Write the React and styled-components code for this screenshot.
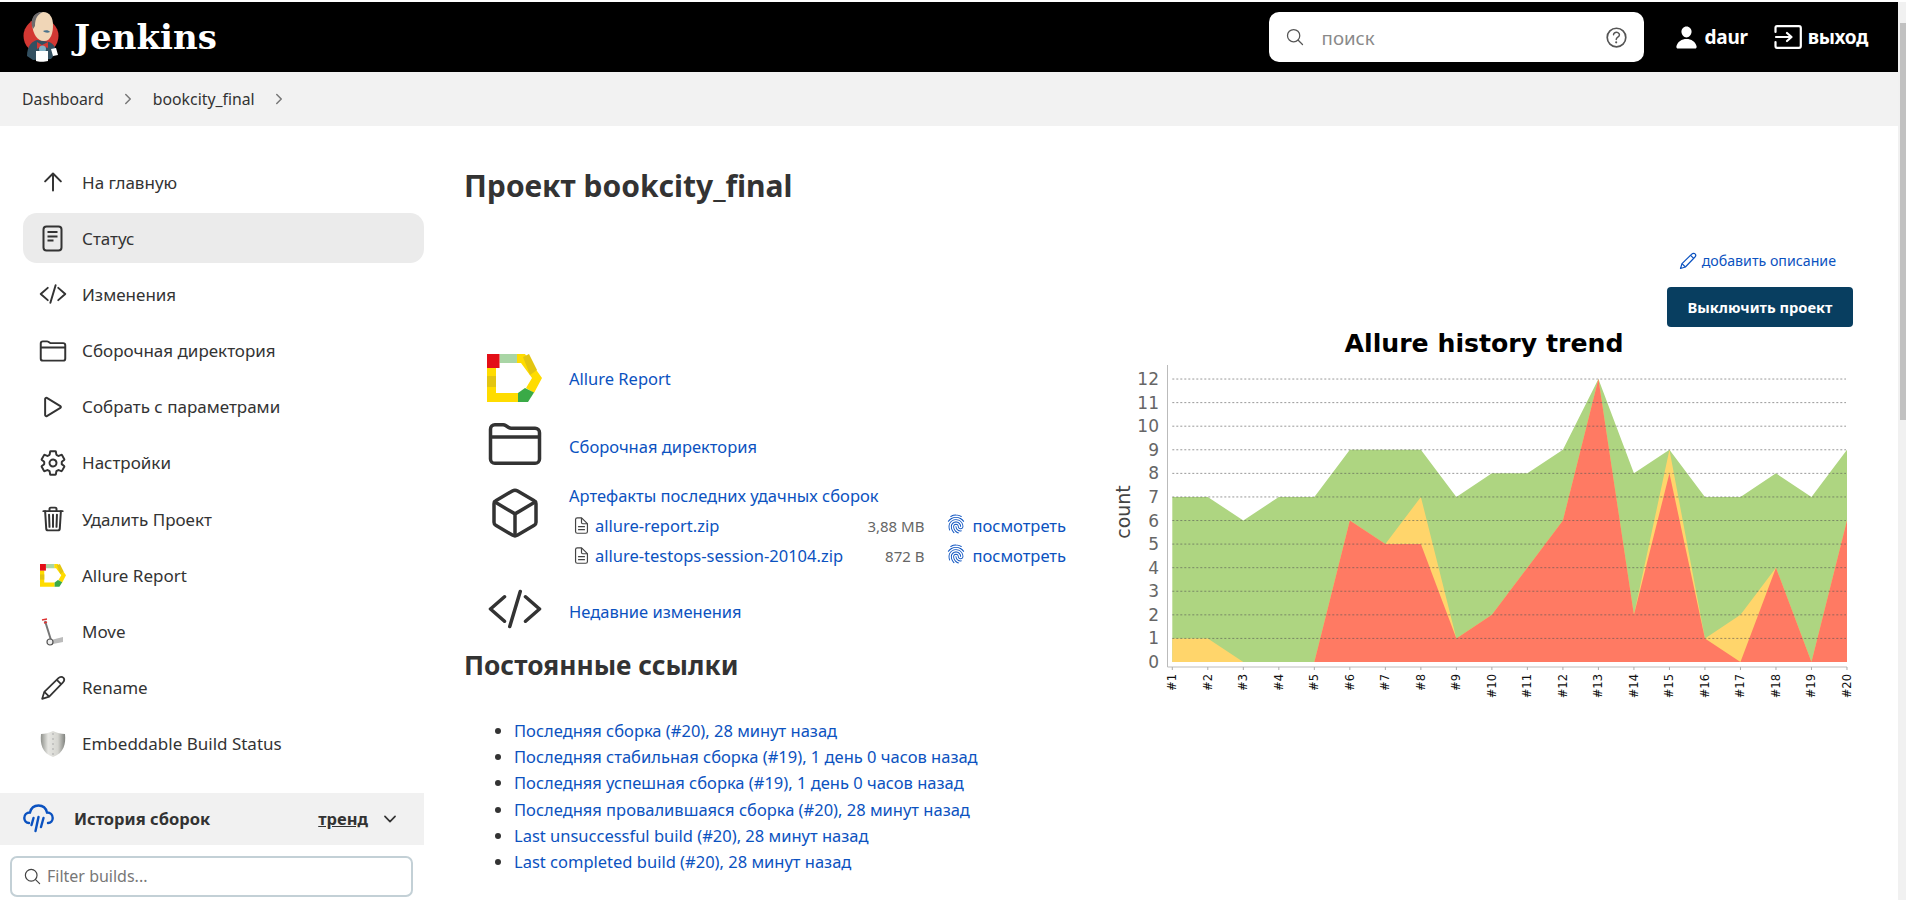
import React from 'react';
import styled, {createGlobalStyle} from 'styled-components';
import {
    IoArrowUpOutline, IoCodeSlashOutline, IoFolderOutline, IoPlayOutline, IoDocumentTextOutline,
    IoSettingsOutline, IoTrashOutline, IoChevronDownOutline,
    IoChevronForwardOutline, IoSearchOutline, IoHelpCircleOutline, IoPerson, IoCubeOutline,
    IoFingerPrintOutline,
} from 'react-icons/io5';

const GlobalStyle = createGlobalStyle`
  html, body {
    margin: 0;
    height: 900px;
    overflow: hidden;
    background: #fff;
  }
  body {
    font-family: "Noto Sans", "Liberation Sans", sans-serif;
    color: #333;
  }
  * { box-sizing: border-box; }
`

const WindowSC = styled('div')`
  display: flex;
  width: 1906px;
  height: 900px;
  padding-top: 2px;
  background: #fff;
`

const PageSC = styled('div')`
  width: 1898px;
  height: 898px;
  display: flex;
  flex-direction: column;
  overflow: hidden;
`

const ScrollbarSC = styled('div')`
  width: 8px;
  background: #f1f1f1;
  padding: 21px 0 0 2px;
  height: 898px;
`

const ThumbSC = styled('div')`
  width: 6px;
  height: 397px;
  background: #c1c1c1;
`

const HeaderSC = styled('header')`
  height: 70px;
  background: #000;
  color: #fff;
  display: flex;
  align-items: center;
  padding: 0 30px 0 23px;
  flex-shrink: 0;
`

const BrandSC = styled('div')`
  display: flex;
  align-items: center;
  gap: 15px;
  flex: 1;
  font-family: "DejaVu Serif", serif;
  font-weight: 700;
  font-size: 34px;
`

const SearchSC = styled('div')`
  width: 375px;
  height: 50px;
  background: #fff;
  border-radius: 10px;
  display: flex;
  align-items: center;
  padding: 0 14px 0 16px;
  color: #555;
  margin-right: 30px;
`

const SearchInputSC = styled('input')`
  flex: 1;
  border: 0;
  outline: none;
  min-width: 0;
  margin-left: 15px;
  font: 400 18.7px "Noto Sans", sans-serif;
  &::placeholder { color: #8a8a8a; opacity: 1; }
`

const HeaderLinkSC = styled('div')`
  display: flex;
  align-items: center;
  gap: 6px;
  font-weight: 700;
  font-size: 19px;
  letter-spacing: -0.3px;
  margin-left: ${props => props.$left || 0}px;
`

const CrumbsSC = styled('nav')`
  height: 54px;
  background: #f2f2f2;
  display: flex;
  align-items: center;
  padding-left: 22px;
  font-size: 15.8px;
  color: #333;
  flex-shrink: 0;
`

const CrumbSepSC = styled('span')`
  display: inline-flex;
  margin: 0 16.5px;
  color: #777;
`

const BodySC = styled('div')`
  flex: 1;
  display: flex;
  min-height: 0;
`

const SidebarSC = styled('aside')`
  width: 424px;
  flex-shrink: 0;
  padding-top: 31px;
`

const NavSC = styled('div')`
  display: flex;
  flex-direction: column;
  gap: 6.2px;
  padding-left: 23px;
`

const NavItemSC = styled('div')`
  height: 50px;
  display: flex;
  align-items: center;
  border-radius: 14px;
  background: ${props => props.$active ? '#ebebeb' : 'transparent'};
  font-size: 17px;
  color: #333;
`

const NavIconSC = styled('span')`
  width: 59px;
  display: flex;
  justify-content: center;
  flex-shrink: 0;
  font-size: 28px;

  ${props => props.$thin && 'svg * { stroke-width: 36px; }'}
`

const HistoryBarSC = styled('div')`
  margin-top: 24px;
  height: 52px;
  background: #f1f1f1;
  display: flex;
  align-items: center;
  padding: 0 25px 0 23px;
  font-weight: 700;
  font-size: 16.5px;
`

const HistoryTitleSC = styled('span')`
  flex: 1;
  margin-left: 20px;
`

const TrendSC = styled('span')`
  text-decoration: underline;
  margin-right: 13px;
`

const FilterSC = styled('div')`
  margin: 11px 0 0 10px;
  width: 403px;
  height: 41px;
  border: 2px solid #c3d0d6;
  border-radius: 7px;
  display: flex;
  align-items: center;
  padding-left: 11px;
  color: #444;
`

const FilterInputSC = styled('input')`
  flex: 1;
  border: 0;
  outline: none;
  min-width: 0;
  margin-left: 3px;
  font: 400 16px "Noto Sans", sans-serif;
  &::placeholder { color: #777; opacity: 1; }
`

const MainSC = styled('main')`
  flex: 1;
  padding: 0 45px 0 40px;
  min-width: 0;
`

const TitleSC = styled('h1')`
  margin: 39px 0 0;
  font-size: 30px;
  line-height: 42px;
  font-weight: 700;
`

const ActionsSC = styled('div')`
  margin-top: 43px;
  display: flex;
  flex-direction: column;
  align-items: flex-end;
`

const AddDescSC = styled('a')`
  display: flex;
  align-items: center;
  gap: 5px;
  color: #0b52c0;
  font-size: 14.2px;
  line-height: 22px;
  margin-right: 17px;
`

const DisableBtnSC = styled('button')`
  margin-top: 15px;
  width: 186px;
  height: 40px;
  border: 0;
  border-radius: 4px;
  background: #083e60;
  color: #fff;
  font: 700 14.7px "Noto Sans", sans-serif;
`

const ColumnsSC = styled('div')`
  display: flex;
  justify-content: space-between;
  margin-right: -7px;
`

const LeftSC = styled('div')`
  width: 640px;
  padding-top: 27px;
`

const LinkRowSC = styled('div')`
  display: flex;
  align-items: ${props => props.$top ? 'flex-start' : 'center'};
  height: ${props => props.$h}px;
  margin-bottom: 19px;
  padding-left: 23px;
`

const BigIconSC = styled('span')`
  width: 82px;
  flex-shrink: 0;
  display: flex;
  font-size: 56px;
  color: #333;
  line-height: 0;
`

const LinkSC = styled('a')`
  color: #0b52c0;
  font-size: 16.5px;
  line-height: 22px;
  padding-top: ${props => props.$shift || 0}px;
`

const ArtifactsSC = styled('div')`
  flex: 1;
`

const ArtifactTitleSC = styled(LinkSC)`
  display: block;
  height: 26px;
`

const ArtifactRowSC = styled('div')`
  display: grid;
  grid-template-columns: 20px 1fr auto 48px auto;
  align-items: center;
  height: 30px;
  margin-left: 6px;
  width: 491px;
`

const ArtifactSizeSC = styled('span')`
  text-align: right;
  color: #666;
  font-size: 15px;
`

const FingerprintSC = styled('span')`
  display: flex;
  justify-content: flex-end;
  padding-right: 6px;
  margin-top: -5px;
  color: #0b52c0;
  font-size: 20px;
`

const FileIconSC = styled('span')`
  display: flex;
  color: #444;
  font-size: 19px;
  margin-left: -3px;
  margin-top: -2px;
`

const SubTitleSC = styled('h2')`
  margin: 1px 0 0;
  font-size: 26.3px;
  line-height: 34px;
  font-weight: 700;
`

const PermalinksSC = styled('ul')`
  margin: 36px 0 0;
  padding: 0 0 0 50px;
  list-style: disc;
`

const PermalinkSC = styled('li')`
  height: 26.2px;
  line-height: 26px;
  font-size: 16.5px;
  color: #333;
`

const ChartSC = styled('svg')`
  display: block;
  width: 750px;
  height: 380px;
  flex-shrink: 0;
  margin-top: 2px;
`

const JenkinsLogo = () => (
    <svg width="36" height="50" viewBox="0 0 36 50">
        <circle cx="18" cy="24" r="17.5" fill="#d33833"/>
        <path d="M4 44 C4 33 10 29 14 28 L26 30 C31 32 33 36 33 41 L28 47 L10 48Z" fill="#335061"/>
        <path d="M9 12 C9 3 15 0 20 0 C27 0 30 6 30 13 C30 21 28 29 21 29 C14 29 10 22 9 12Z" fill="#f0d6b7"/>
        <path d="M9 14 C7 6 13 -1 20 0 C15 2 12 6 12 14 L10 17Z" fill="#6d6b6d"/>
        <path d="M14 30 L19 33 L25 30 L25 36 L19 34 L14 37Z" fill="#d33833"/>
        <circle cx="19.500" cy="37" r="3.500" fill="#81b0c4"/>
        <path d="M13 39 H25 V49 C22 50 15 50 13 49Z" fill="#fff"/>
        <path d="M28 37 L33 36 L35 43 L30 44Z" fill="#fff"/>
        <path d="M20 19 C22 18 26 18 27 20 C25 21 22 21 20 19Z" fill="#49728b"/>
    </svg>
)

const AllureLogo = ({size}) => (
    <svg width={size} height={size * 48 / 55} viewBox="0 0 55 48">
        <path d="M0 14 H9 V39 H31 V48 H0Z" fill="#ffdc00"/>
        <rect x="0" y="22" width="9" height="11" fill="#e3c511"/>
        <path d="M30 0 H38 L55 24 L47 39 L39 34 L45 24 L34 9 H30Z" fill="#ffdc00"/>
        <path d="M36 3 L42 0 L50 16 L43 21Z" fill="#e3c511"/>
        <rect x="12.500" y="0" width="17.500" height="9" fill="#a9d5a5"/>
        <rect x="0" y="0" width="12.500" height="14" fill="#e30f17"/>
        <path d="M31 39 L38 34 L47 38.500 L41 48 H31Z" fill="#3aaa47"/>
    </svg>
)

const StatusIcon = () => (
    <svg width="21" height="27" viewBox="0 0 21 27" fill="none" stroke="#333" strokeWidth="2">
        <rect x="1.500" y="1.500" width="18" height="24" rx="3"/>
        <path d="M5.500 7 H15.500 M5.500 11.500 H15.500 M5.500 15.500 H11.500"/>
    </svg>
)

const PencilIcon = ({size, color}) => (
    <svg width={size} height={size} viewBox="0 0 24 24" fill="none" stroke={color} strokeWidth="1.600" strokeLinejoin="round">
        <path d="M2 22 L4 15.500 L17 2.800 C18.500 1.400 20.500 1.400 21.500 2.500 C22.700 3.700 22.500 5.500 21 7 L8.500 20Z"/>
        <path d="M15.500 4.500 L19.500 8.500 M4 15.500 L8.500 20"/>
    </svg>
)

const RainIcon = () => (
    <svg width="31" height="29" viewBox="0 0 31 29" fill="none" stroke="#0b52c0" strokeWidth="2.400" strokeLinecap="round">
        <path d="M6 19 C3 19 1.300 16.500 1.300 14 C1.300 11 3.500 8.500 7 8.500 C8 4 11.500 1.500 15.500 1.500 C19.500 1.500 23 4 24 8.500 C27.500 8.500 29.700 11 29.700 14 C29.700 16.500 28 19 25 19"/>
        <path d="M10.500 14 L8.500 21 M15.500 13 L12.500 27 M20.500 14 L18 23"/>
    </svg>
)

const MoveIcon = () => (
    <svg width="28" height="28" viewBox="0 0 28 28">
        <path d="M6 3 L12 22" stroke="#777" strokeWidth="2"/>
        <path d="M3 2 L8 1 M5 5 L8 4" stroke="#d33" strokeWidth="1.500"/>
        <path d="M12 22 L24 19 V24 L14 26Z" fill="#bbb"/>
        <circle cx="11" cy="24" r="3" fill="#eee" stroke="#555" strokeWidth="1.200"/>
    </svg>
)

const ShieldIcon = () => (
    <svg width="26" height="28" viewBox="0 0 26 28">
        <defs>
            <linearGradient id="shieldFill" x1="0" x2="1" y1="0" y2="0">
                <stop offset="0" stopColor="#8f918c"/>
                <stop offset="0.3" stopColor="#e6e6e2"/>
                <stop offset="0.7" stopColor="#d5d5d0"/>
                <stop offset="1" stopColor="#80827e"/>
            </linearGradient>
        </defs>
        <path d="M13 1 C17 3 21 4 25 4 C26 14 24 23 13 27 C2 23 0 14 1 4 C5 4 9 3 13 1Z" fill="url(#shieldFill)"/>
        <path d="M13 3 V25" stroke="#aaa" strokeWidth="1" strokeDasharray="2 3"/>
    </svg>
)

const LogoutIcon = () => (
    <svg width="28" height="24" viewBox="0 0 28 24" fill="none" stroke="#fff" strokeWidth="2.200" strokeLinecap="round" strokeLinejoin="round">
        <path d="M1.500 7 V3 C1.500 2 2 1.200 3 1.200 H25 C26 1.200 26.800 2 26.800 3 V21 C26.800 22 26 22.800 25 22.800 H3 C2 22.800 1.500 22 1.500 21 V17"/>
        <path d="M2 12 H17 M13 8 L17.500 12 L13 16"/>
    </svg>
)

const navItems = [
    {label: 'На главную', icon: <IoArrowUpOutline/>, thin: true},
    {label: 'Статус', icon: <StatusIcon/>, active: true},
    {label: 'Изменения', icon: <IoCodeSlashOutline/>, thin: true},
    {label: 'Сборочная директория', icon: <IoFolderOutline/>, thin: true},
    {label: 'Собрать с параметрами', icon: <IoPlayOutline/>, thin: true},
    {label: 'Настройки', icon: <IoSettingsOutline/>, thin: true},
    {label: 'Удалить Проект', icon: <IoTrashOutline/>, thin: true},
    {label: 'Allure Report', icon: <AllureLogo size={26}/>},
    {label: 'Move', icon: <MoveIcon/>},
    {label: 'Rename', icon: <PencilIcon size={26} color="#333"/>},
    {label: 'Embeddable Build Status', icon: <ShieldIcon/>},
]

const artifacts = [
    {name: 'allure-report.zip', size: '3,88 MB'},
    {name: 'allure-testops-session-20104.zip', size: '872 B'},
]

const permalinks = [
    'Последняя сборка (#20), 28 минут назад',
    'Последняя стабильная сборка (#19), 1 день 0 часов назад',
    'Последняя успешная сборка (#19), 1 день 0 часов назад',
    'Последняя провалившаяся сборка (#20), 28 минут назад',
    'Last unsuccessful build (#20), 28 минут назад',
    'Last completed build (#20), 28 минут назад',
]

// chart data, one value per build
const total = [7, 7, 6, 7, 7, 9, 9, 9, 7, 8, 8, 9, 12, 8, 9, 7, 7, 8, 7, 9]
const broken = [1, 1, 0, 0, 0, 6, 5, 7, 1, 2, 4, 6, 12, 2, 9, 1, 2, 4, 0, 6]
const failed = [0, 0, 0, 0, 0, 6, 5, 5, 1, 2, 4, 6, 12, 2, 8, 1, 0, 4, 0, 6]

const X0 = 62.3
const XSTEP = 35.51
const Y0 = 333
const YSTEP = 23.58
const xAt = i => X0 + i * XSTEP
const yAt = v => Y0 - v * YSTEP

const areaPath = values =>
    `M${xAt(0)} ${Y0} ` + values.map((v, i) => `L${xAt(i)} ${yAt(v)}`).join(' ') + ` L${xAt(19)} ${Y0}Z`

const TrendChart = () => (
    <ChartSC viewBox="0 0 750 380">
        <text x="374" y="23" textAnchor="middle" fontFamily="DejaVu Sans" fontWeight="700" fontSize="25.200" fill="#000">Allure history trend</text>
        <path d={areaPath(total)} fill="#aed581"/>
        <path d={areaPath(broken)} fill="#ffd56b"/>
        <path d={areaPath(failed)} fill="#ff7a63"/>
        {Array.from({length: 13}, (_, v) => (
            <g key={v}>
                {v > 0 && <line x1={X0} x2="736" y1={yAt(v)} y2={yAt(v)} stroke="#555" strokeOpacity="0.6" strokeDasharray="2 2"/>}
                <text x="49" y={yAt(v) + 6} textAnchor="end" fontFamily="DejaVu Sans" fontSize="17" fill="#666">{v}</text>
            </g>
        ))}
        <path d="M57.500 36 V338 H737" fill="none" stroke="#bbb" strokeWidth="1"/>
        {total.map((_, i) => (
            <g key={i}>
                <line x1={xAt(i)} x2={xAt(i)} y1="338" y2="341" stroke="#aaa"/>
                <text transform={`translate(${xAt(i) + 4} 345) rotate(-90)`} textAnchor="end" fontFamily="DejaVu Sans" fontSize="11.500" fill="#111">#{i + 1}</text>
            </g>
        ))}
        <text transform="translate(20 183) rotate(-90)" textAnchor="middle" fontFamily="DejaVu Sans" fontSize="19" fill="#444">count</text>
    </ChartSC>
)

const App = () => {
    return (
        <WindowSC>
            <GlobalStyle/>
            <PageSC>
                <HeaderSC>
                    <BrandSC><JenkinsLogo/>Jenkins</BrandSC>
                    <SearchSC>
                        <IoSearchOutline size={20}/>
                        <SearchInputSC placeholder="поиск" readOnly/>
                        <IoHelpCircleOutline size={27}/>
                    </SearchSC>
                    <HeaderLinkSC><IoPerson size={25}/>daur</HeaderLinkSC>
                    <HeaderLinkSC $left={26}><LogoutIcon/>выход</HeaderLinkSC>
                </HeaderSC>
                <CrumbsSC>
                    Dashboard
                    <CrumbSepSC><IoChevronForwardOutline size={16}/></CrumbSepSC>
                    bookcity_final
                    <CrumbSepSC><IoChevronForwardOutline size={16}/></CrumbSepSC>
                </CrumbsSC>
                <BodySC>
                    <SidebarSC>
                        <NavSC>
                            {navItems.map(item => (
                                <NavItemSC key={item.label} $active={item.active}>
                                    <NavIconSC $thin={item.thin}>{item.icon}</NavIconSC>
                                    {item.label}
                                </NavItemSC>
                            ))}
                        </NavSC>
                        <HistoryBarSC>
                            <RainIcon/>
                            <HistoryTitleSC>История сборок</HistoryTitleSC>
                            <TrendSC>тренд</TrendSC>
                            <IoChevronDownOutline size={18}/>
                        </HistoryBarSC>
                        <FilterSC>
                            <IoSearchOutline size={19}/>
                            <FilterInputSC placeholder="Filter builds..." readOnly/>
                        </FilterSC>
                    </SidebarSC>
                    <MainSC>
                        <TitleSC>Проект bookcity_final</TitleSC>
                        <ActionsSC>
                            <AddDescSC><PencilIcon size={18} color="#0b52c0"/>добавить описание</AddDescSC>
                            <DisableBtnSC>Выключить проект</DisableBtnSC>
                        </ActionsSC>
                        <ColumnsSC>
                            <LeftSC>
                                <LinkRowSC $h={48}>
                                    <BigIconSC><AllureLogo size={55}/></BigIconSC>
                                    <LinkSC $shift={2}>Allure Report</LinkSC>
                                </LinkRowSC>
                                <LinkRowSC $h={45}>
                                    <BigIconSC><IoFolderOutline/></BigIconSC>
                                    <LinkSC $shift={6}>Сборочная директория</LinkSC>
                                </LinkRowSC>
                                <LinkRowSC $h={84} $top>
                                    <BigIconSC><IoCubeOutline/></BigIconSC>
                                    <ArtifactsSC>
                                        <ArtifactTitleSC>Артефакты последних удачных сборок</ArtifactTitleSC>
                                        {artifacts.map(file => (
                                            <ArtifactRowSC key={file.name}>
                                                <FileIconSC><IoDocumentTextOutline/></FileIconSC>
                                                <LinkSC>{file.name}</LinkSC>
                                                <ArtifactSizeSC>{file.size}</ArtifactSizeSC>
                                                <FingerprintSC><IoFingerPrintOutline/></FingerprintSC>
                                                <LinkSC>посмотреть</LinkSC>
                                            </ArtifactRowSC>
                                        ))}
                                    </ArtifactsSC>
                                </LinkRowSC>
                                <LinkRowSC $h={41}>
                                    <BigIconSC><IoCodeSlashOutline/></BigIconSC>
                                    <LinkSC $shift={7}>Недавние изменения</LinkSC>
                                </LinkRowSC>
                                <SubTitleSC>Постоянные ссылки</SubTitleSC>
                                <PermalinksSC>
                                    {permalinks.map(text => (
                                        <PermalinkSC key={text}><LinkSC>{text}</LinkSC></PermalinkSC>
                                    ))}
                                </PermalinksSC>
                            </LeftSC>
                            <TrendChart/>
                        </ColumnsSC>
                    </MainSC>
                </BodySC>
            </PageSC>
            <ScrollbarSC><ThumbSC/></ScrollbarSC>
        </WindowSC>
    );
}

export default App;
